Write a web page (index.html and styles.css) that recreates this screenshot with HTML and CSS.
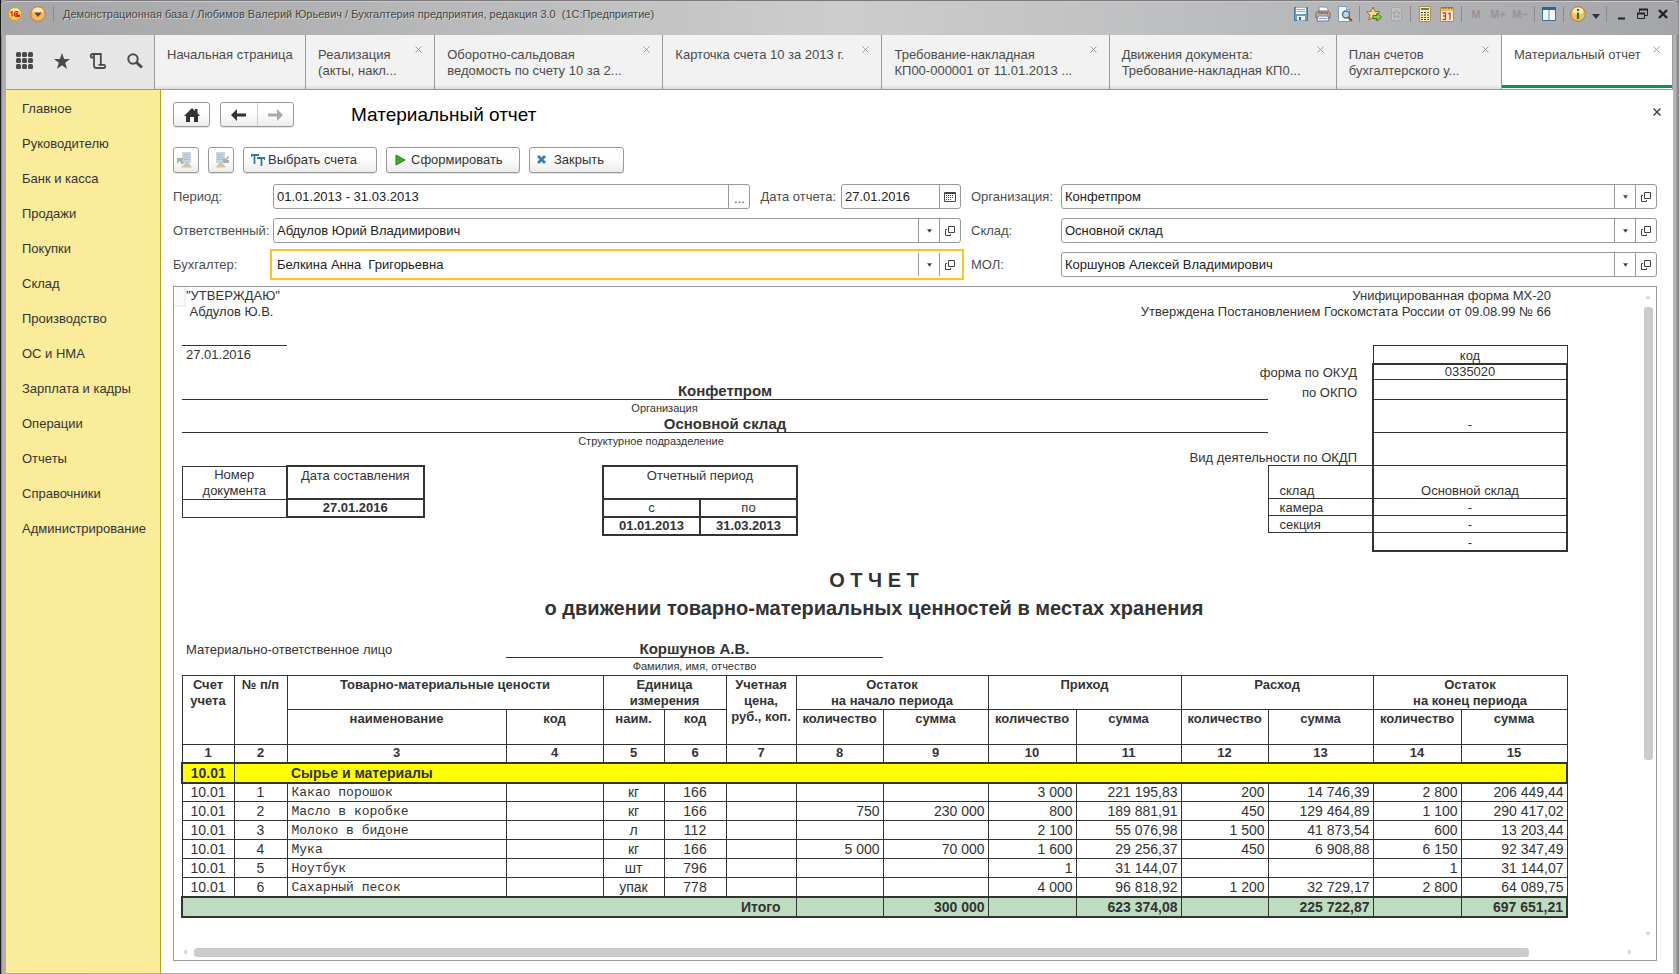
FILE: index.html
```html
<!DOCTYPE html>
<html lang="ru">
<head>
<meta charset="utf-8">
<title>Материальный отчет</title>
<link rel="stylesheet" href="styles.css">
</head>
<body>
<svg class="defs" width="0" height="0" aria-hidden="true">
  <symbol id="i-x" viewBox="0 0 7 7"><path d="M.5.5l6 6M6.5.5l-6 6" stroke="currentColor" fill="none"/></symbol>
  <symbol id="i-down" viewBox="0 0 6 4"><path d="M0 0h6L3 4z" fill="currentColor"/></symbol>
  <symbol id="i-open" viewBox="0 0 10 10"><path d="M3.500.5h6v6h-6zM2 3.500H.5v6h5V8" stroke="currentColor" fill="none"/></symbol>
</svg>
<div class="window">
  <header class="titlebar">
    <svg class="logo" width="14" height="14" viewBox="0 0 14 14"><circle cx="7" cy="7" r="6.500" fill="#fbd64a" stroke="#d89a2a"/><ellipse cx="7" cy="4" rx="4.500" ry="2.500" fill="#fff3b0"/><path d="M2.500 5.500L4 4.500v5M10.500 5.500C9.500 4 6.200 4.200 6.200 7c0 1.800 1 2.400 2.300 2.400H12M10 6.600c-1-.8-2 0-2 .7s.7.800 1.200.8H12" fill="none" stroke="#d8200c" stroke-width="1.200"/></svg>
    <svg class="menu-ball" width="16" height="16" viewBox="0 0 16 16"><circle cx="8" cy="8" r="7.300" fill="#f5b764" stroke="#c47a30"/><ellipse cx="8" cy="5" rx="5.500" ry="3.500" fill="#fde3b8"/><path d="M4 6.500h8L8 11z" fill="#5d4a3a"/></svg>
    <i class="sep"></i>
    <h1 class="caption">Демонстрационная база / Любимов Валерий Юрьевич / Бухгалтерия предприятия, редакция 3.0&nbsp; (1С:Предприятие)</h1>
    <div class="sys">
      <svg width="16" height="16" viewBox="0 0 16 16"><path d="M1.500 1.500h13v13h-13z" fill="#6f9dbf" stroke="#4d7799"/><path d="M3 1.500h10V8H3z" fill="#f3f8fb"/><path d="M4 3.500h8M4 5.500h8" stroke="#8fb0c8"/><path d="M4 10h8v4.500H4z" fill="#e9eef0"/><path d="M6 11h2v3H6z" fill="#3c678c"/></svg>
      <svg width="16" height="16" viewBox="0 0 16 16"><path d="M4 1h7l2 2v4H4z" fill="#fff" stroke="#8890a0"/><path d="M1 7l2-2h10l2 2v5H1z" fill="#c8b8ae" stroke="#6d6060"/><path d="M3 7h10" stroke="#4a4444"/><path d="M3 10h10l1 5H2z" fill="#f4f6fa" stroke="#7b7f88"/><path d="M4 12.500h8" stroke="#7ea3cc"/><path d="M12 8.500h2" stroke="#e07030"/></svg>
      <svg width="16" height="16" viewBox="0 0 16 16"><path d="M1.500.5h8l3 3v12h-11z" fill="#f6fafd" stroke="#7a9ab4"/><path d="M9.500.5v3h3" fill="#c8dcea" stroke="#7a9ab4"/><circle cx="9" cy="8.500" r="3.500" fill="#b7daf0" stroke="#54728a" stroke-width="1.400"/><path d="M11.500 11.500l3.500 3.500" stroke="#9a5030" stroke-width="2.200"/></svg>
      <i class="sep"></i>
      <svg width="16" height="16" viewBox="0 0 16 16"><path d="M7 1l2 4.500 5 .3-4 3.200 1.300 5L7 11.500 2.700 14 4 9 .5 5.800l4.600-.3z" fill="#f8d890" stroke="#a8701c"/><path d="M7 9.500h4V7l4.500 4-4.500 4v-2.500H7z" fill="#8ed04a" stroke="#3c7a18"/></svg>
      <svg class="dim" width="16" height="16" viewBox="0 0 16 16"><path d="M3.500 1.500h10v13h-10z" fill="#c4ced6" stroke="#96a4b0"/><path d="M8.500 4l1.200 2.600 2.800.2-2.200 1.800.8 3-2.600-1.500L5.900 11.600l.8-3L4.500 6.800l2.800-.2z" fill="#cfc4a8" stroke="#a09480"/></svg>
      <i class="sep"></i>
      <svg width="16" height="16" viewBox="0 0 16 16"><path d="M2.500.5h11v15h-11z" fill="#fbeeb8" stroke="#b48a50"/><path d="M4 2h8v2H4z" fill="#5a8a40"/><path d="M4 6.500h8M4 9h8M4 11.500h8M4 13.500h8" stroke="#4a4030" stroke-dasharray="2 1"/><path d="M10.500 6v8" stroke="#d06030" stroke-dasharray="1 1.500"/></svg>
      <svg width="16" height="16" viewBox="0 0 16 16"><path d="M1.500 1.500h13v14h-13z" fill="#fdf3d4" stroke="#b48a50"/><path d="M2 2h12v3H2z" fill="#eab858"/><path d="M4 1v2M7 1v2M10 1v2M12.500 1v2" stroke="#704820"/><path d="M3.500 7h3v6.500h-3M4 10h2.500M9 8l2-1v7" fill="none" stroke="#d83a1a" stroke-width="1.300"/></svg>
      <i class="sep"></i>
      <span class="mem">M</span><span class="mem">M+</span><span class="mem">M−</span>
      <i class="sep"></i>
      <svg width="16" height="16" viewBox="0 0 16 16"><path d="M1.500 1.500h13v13h-13z" fill="#f5f8fb" stroke="#3a6a96"/><path d="M1 1h14v3H1z" fill="#2f6594"/><path d="M8 4v10" stroke="#6a8cab"/></svg>
      <i class="sep"></i>
      <svg width="16" height="16" viewBox="0 0 16 16"><circle cx="8" cy="8" r="7.300" fill="#f4c05c" stroke="#b87830"/><ellipse cx="8" cy="5" rx="5.500" ry="3.500" fill="#fde6b0"/><path d="M8 3v2M8 6.500V13" stroke="#3d6a28" stroke-width="2.200"/></svg>
      <svg class="low" width="8" height="5" viewBox="0 0 8 5"><path d="M0 0h8L4 5z" fill="#333"/></svg>
      <i class="sep"></i>
      <button class="sysbtn" aria-label="Свернуть"><svg width="14" height="14" viewBox="0 0 14 14"><path d="M4 11.500h7" stroke="#222" stroke-width="2"/></svg></button>
      <button class="sysbtn" aria-label="Восстановить"><svg width="14" height="14" viewBox="0 0 14 14"><path d="M4.500 5V2.500h8v6H10M2.500 6.500h7v5h-7z" stroke="#222" fill="none"/><path d="M4 2.500h9M2 6.500h8" stroke="#222" stroke-width="2"/></svg></button>
      <button class="sysbtn" aria-label="Закрыть окно"><svg width="14" height="14" viewBox="0 0 14 14"><path d="M3 3l8 8M11 3l-8 8" stroke="#222" stroke-width="2.400"/></svg></button>
    </div>
  </header>

  <nav class="tabs">
    <div class="tools">
      <button class="tool" aria-label="Меню"><svg width="18" height="18" viewBox="0 0 18 18" fill="#4a4a4a"><rect width="5" height="5" rx="1.500"/><rect x="6" width="5" height="5" rx="1.500"/><rect x="12" width="5" height="5" rx="1.500"/><rect y="6" width="5" height="5" rx="1.500"/><rect x="6" y="6" width="5" height="5" rx="1.500"/><rect x="12" y="6" width="5" height="5" rx="1.500"/><rect y="12" width="5" height="5" rx="1.500"/><rect x="6" y="12" width="5" height="5" rx="1.500"/><rect x="12" y="12" width="5" height="5" rx="1.500"/></svg></button>
      <button class="tool" aria-label="Избранное"><svg width="18" height="18" viewBox="0 0 18 18"><path d="M9 1l2.100 6H17l-4.800 3.700L14 17l-5-3.800L4 17l1.800-6.300L1 7h5.900z" fill="#4a4a4a"/></svg></button>
      <button class="tool" aria-label="История"><svg width="18" height="18" viewBox="0 0 18 18" fill="none" stroke="#4a4a4a" stroke-width="1.800"><path d="M4.500 5.500H2.800C1.500 5.500 1.200 2 3.500 2h8.300v11.500"/><path d="M5 3v10.500c0 1.500 1 2.500 2.300 2.500h7.500c2 0 1.600-3.200.4-3.200H9.500"/></svg></button>
      <button class="tool" aria-label="Поиск"><svg width="18" height="18" viewBox="0 0 18 18" fill="none" stroke="#4a4a4a"><circle cx="7" cy="7" r="4.700" stroke-width="2"/><path d="M10.500 10.500l5.500 5" stroke-width="3"/></svg></button>
    </div>
    <a class="tab t1" href="#"><span>Начальная страница</span></a>
    <a class="tab t2" href="#"><span>Реализация<br>(акты, накл...</span><svg class="x" width="7" height="7"><use href="#i-x"/></svg></a>
    <a class="tab t3" href="#"><span>Оборотно-сальдовая<br>ведомость по счету 10 за 2...</span><svg class="x" width="7" height="7"><use href="#i-x"/></svg></a>
    <a class="tab t4" href="#"><span>Карточка счета 10 за 2013 г.</span><svg class="x" width="7" height="7"><use href="#i-x"/></svg></a>
    <a class="tab t5" href="#"><span>Требование-накладная<br>КП00-000001 от 11.01.2013 ...</span><svg class="x" width="7" height="7"><use href="#i-x"/></svg></a>
    <a class="tab t5" href="#"><span>Движения документа:<br>Требование-накладная КП0...</span><svg class="x" width="7" height="7"><use href="#i-x"/></svg></a>
    <a class="tab t6" href="#"><span>План счетов<br>бухгалтерского у...</span><svg class="x" width="7" height="7"><use href="#i-x"/></svg></a>
    <a class="tab t7 active" href="#"><span>Материальный отчет</span><svg class="x" width="7" height="7"><use href="#i-x"/></svg></a>
  </nav>

  <div class="body">
    <nav class="side">
      <a href="#">Главное</a><a href="#">Руководителю</a><a href="#">Банк и касса</a><a href="#">Продажи</a><a href="#">Покупки</a><a href="#">Склад</a><a href="#">Производство</a><a href="#">ОС и НМА</a><a href="#">Зарплата и кадры</a><a href="#">Операции</a><a href="#">Отчеты</a><a href="#">Справочники</a><a href="#">Администрирование</a>
    </nav>

    <main class="main">
      <div class="head">
        <button class="btn home" aria-label="Домой"><svg width="16" height="14" viewBox="0 0 16 14"><path d="M8 0l3 3V1h2.500v4.200L16 8h-2v6h-4V9H6v5H2V8H0z" fill="#333"/></svg></button>
        <div class="navpair">
          <button aria-label="Назад"><svg width="15" height="12" viewBox="0 0 15 12"><path d="M0 6l6-6v4.500h9v3H6V12z" fill="#333"/></svg></button>
          <button aria-label="Вперед"><svg width="15" height="12" viewBox="0 0 15 12"><path d="M15 6L9 0v4.500H0v3h9V12z" fill="#aaa"/></svg></button>
        </div>
        <h2>Материальный отчет</h2>
        <button class="close" aria-label="Закрыть форму"><svg width="8" height="8" viewBox="0 0 8 8"><path d="M.5.5l7 7M7.500.5l-7 7" stroke="#444" stroke-width="1.500"/></svg></button>
      </div>

      <div class="toolbar">
        <button class="btn sq" aria-label="Загрузить"><svg width="18" height="16" viewBox="0 0 18 16"><path d="M5 0h9v11H5z" fill="#c8d3da"/><path d="M7 2.500h6M7 5h6M7 7.500h6" stroke="#adbcc6"/><path d="M0 6h6v2L4.500 7.500 7 11l-2 1.500L2.500 9 0 12z" fill="#a3b5a3"/><path d="M4 15.500l5-5h2l4 5z" fill="#d0c3a6"/></svg></button>
        <button class="btn sq" aria-label="Сохранить"><svg width="18" height="16" viewBox="0 0 18 16"><path d="M4 0h9v11H4z" fill="#c8d3da"/><path d="M5 2.500h6M5 5h6M5 7.500h6" stroke="#adbcc6"/><path d="M16 4l1 1-2 3h2v3h-6V6l2 1z" fill="#a3b5a3"/><path d="M3 15.500l5-5h2l4 5z" fill="#d0c3a6"/></svg></button>
        <button class="btn wide"><svg width="14" height="14" viewBox="0 0 14 14"><path d="M0 2h8M3.500 2v9M6 5h8M10.500 5v8" stroke="#2f7ba8" stroke-width="1.800"/><path d="M.5 1v3M7.500 1v2M13.500 4v3" stroke="#2f7ba8"/></svg>Выбрать счета</button>
        <button class="btn wide"><svg width="14" height="12" viewBox="0 0 14 12"><path d="M2 1l9 5-9 5z" fill="#3cae22" stroke="#2a7d18"/></svg>Сформировать</button>
        <button class="btn mid"><svg width="14" height="12" viewBox="0 0 14 12"><path d="M1 2l7 7M8 2L1 9" stroke="#3b7fb0" stroke-width="3"/></svg>Закрыть</button>
      </div>

      <form class="form">
        <label class="lb" for="period">Период:</label>
        <div class="pair">
          <div class="field grow"><input id="period" value="01.01.2013 - 31.03.2013"><button type="button" class="fb dots" aria-label="Выбрать период">...</button></div>
          <label for="date">Дата отчета:</label>
          <div class="field date"><input id="date" value="27.01.2016"><button type="button" class="fb" aria-label="Календарь"><svg width="12" height="10" viewBox="0 0 12 10"><path d="M.5.5h11v9H.5z" fill="none" stroke="#444"/><path d="M.5 1.500h11" stroke="#444"/><path d="M2 3.500h8M2 5.500h8M2 7.500h6" stroke="#444" stroke-dasharray="1 1"/></svg></button></div>
        </div>
        <label class="rb" for="org">Организация:</label>
        <div class="field"><input id="org" value="Конфетпром"><button type="button" class="fb" aria-label="Список организаций"><svg class="drop"><use href="#i-down"/></svg></button><button type="button" class="fb" aria-label="Открыть организацию"><svg width="10" height="10"><use href="#i-open"/></svg></button></div>

        <label class="lb" for="resp">Ответственный:</label>
        <div class="field"><input id="resp" value="Абдулов Юрий Владимирович"><button type="button" class="fb" aria-label="Список ответственных"><svg class="drop"><use href="#i-down"/></svg></button><button type="button" class="fb" aria-label="Открыть ответственного"><svg width="10" height="10"><use href="#i-open"/></svg></button></div>
        <label class="rb" for="store">Склад:</label>
        <div class="field"><input id="store" value="Основной склад"><button type="button" class="fb" aria-label="Список складов"><svg class="drop"><use href="#i-down"/></svg></button><button type="button" class="fb" aria-label="Открыть склад"><svg width="10" height="10"><use href="#i-open"/></svg></button></div>

        <label class="lb" for="acc">Бухгалтер:</label>
        <div class="field current"><input id="acc" value="Белкина Анна  Григорьевна"><button type="button" class="fb" aria-label="Список бухгалтеров"><svg class="drop"><use href="#i-down"/></svg></button><button type="button" class="fb" aria-label="Открыть бухгалтера"><svg width="10" height="10"><use href="#i-open"/></svg></button></div>
        <label class="rb" for="mol">МОЛ:</label>
        <div class="field"><input id="mol" value="Коршунов Алексей Владимирович"><button type="button" class="fb" aria-label="Список МОЛ"><svg class="drop"><use href="#i-down"/></svg></button><button type="button" class="fb" aria-label="Открыть МОЛ"><svg width="10" height="10"><use href="#i-open"/></svg></button></div>
      </form>

      <section class="report">
        <div class="sheet">
          <i class="cellmark"></i>
          <div class="top">
            <p class="approve">"УТВЕРЖДАЮ"<br>&nbsp;Абдулов Ю.В.</p>
            <p class="unified">Унифицированная форма МХ-20<br>Утверждена Постановлением Госкомстата России от 09.08.99 № 66</p>
            <p class="sign">27.01.2016</p>
            <p class="org">Конфетпром</p>
            <p class="org-cap">Организация</p>
            <p class="dept">Основной склад</p>
            <p class="dept-cap">Структурное подразделение</p>
            <table class="tb docno">
              <tr class="h33"><td>Номер<br>документа</td><td class="thick">Дата составления</td></tr>
              <tr class="h17"><td></td><td class="thick b">27.01.2016</td></tr>
            </table>
            <table class="tb period">
              <tr class="h33"><td colspan="2" class="thick">Отчетный период</td></tr>
              <tr class="h17"><td class="thick">с</td><td class="thick">по</td></tr>
              <tr class="h17"><td class="thick b">01.01.2013</td><td class="thick b">31.03.2013</td></tr>
            </table>
            <table class="tb codes">
              <colgroup><col class="k1"><col class="k2"><col class="k3"></colgroup>
              <tr class="h18"><td colspan="2" class="no"></td><td>код</td></tr>
              <tr class="h16"><td colspan="2" class="no r">форма по ОКУД</td><td class="c first">0335020</td></tr>
              <tr class="h20"><td colspan="2" class="no r">по ОКПО</td><td class="c"></td></tr>
              <tr class="h33"><td colspan="2" class="no"></td><td class="c">-</td></tr>
              <tr class="h33"><td colspan="2" class="no r">Вид деятельности по ОКДП</td><td class="c"></td></tr>
              <tr class="h33"><td class="no"></td><td class="l">склад</td><td class="c">Основной склад</td></tr>
              <tr class="h17"><td class="no"></td><td class="l">камера</td><td class="c">-</td></tr>
              <tr class="h17"><td class="no"></td><td class="l">секция</td><td class="c">-</td></tr>
              <tr class="h18"><td class="no"></td><td class="no"></td><td class="c last">-</td></tr>
            </table>
          </div>
          <div class="title"><h3>О Т Ч Е Т</h3><h3>о движении товарно-материальных ценностей в местах хранения</h3></div>
          <div class="person"><p class="who">Материально-ответственное лицо</p><p class="name">Коршунов А.В.</p><p class="fio">Фамилия, имя, отчество</p></div>

          <table class="tb data">
            <colgroup><col class="w52"><col class="w53"><col class="w219"><col class="w97"><col class="w61"><col class="w62"><col class="w70"><col class="w87"><col class="w105"><col class="w88"><col class="w105"><col class="w87"><col class="w105"><col class="w88"><col class="w106"></colgroup>
            <thead>
              <tr class="h33"><th rowspan="2">Счет<br>учета</th><th rowspan="2">№ п/п</th><th colspan="2">Товарно-материальные цености</th><th colspan="2">Единица<br>измерения</th><th rowspan="2">Учетная<br>цена,<br>руб., коп.</th><th colspan="2">Остаток<br>на начало периода</th><th colspan="2">Приход</th><th colspan="2">Расход</th><th colspan="2">Остаток<br>на конец периода</th></tr>
              <tr class="h35"><th>наименование</th><th>код</th><th>наим.</th><th>код</th><th>количество</th><th>сумма</th><th>количество</th><th>сумма</th><th>количество</th><th>сумма</th><th>количество</th><th>сумма</th></tr>
              <tr class="nums"><th>1</th><th>2</th><th>3</th><th>4</th><th>5</th><th>6</th><th>7</th><th>8</th><th>9</th><th>10</th><th>11</th><th>12</th><th>13</th><th>14</th><th>15</th></tr>
            </thead>
            <tbody>
              <tr class="group"><td>10.01</td><td class="nr"></td><td class="nl" colspan="13">Сырье и материалы</td></tr>
              <tr><td>10.01</td><td>1</td><td>Какао порошок</td><td></td><td>кг</td><td>166</td><td></td><td></td><td></td><td>3 000</td><td>221 195,83</td><td>200</td><td>14 746,39</td><td>2 800</td><td>206 449,44</td></tr>
              <tr><td>10.01</td><td>2</td><td>Масло в коробке</td><td></td><td>кг</td><td>166</td><td></td><td>750</td><td>230 000</td><td>800</td><td>189 881,91</td><td>450</td><td>129 464,89</td><td>1 100</td><td>290 417,02</td></tr>
              <tr><td>10.01</td><td>3</td><td>Молоко в бидоне</td><td></td><td>л</td><td>112</td><td></td><td></td><td></td><td>2 100</td><td>55 076,98</td><td>1 500</td><td>41 873,54</td><td>600</td><td>13 203,44</td></tr>
              <tr><td>10.01</td><td>4</td><td>Мука</td><td></td><td>кг</td><td>166</td><td></td><td>5 000</td><td>70 000</td><td>1 600</td><td>29 256,37</td><td>450</td><td>6 908,88</td><td>6 150</td><td>92 347,49</td></tr>
              <tr><td>10.01</td><td>5</td><td>Ноутбук</td><td></td><td>шт</td><td>796</td><td></td><td></td><td></td><td>1</td><td>31 144,07</td><td></td><td></td><td>1</td><td>31 144,07</td></tr>
              <tr><td>10.01</td><td>6</td><td>Сахарный песок</td><td></td><td>упак</td><td>778</td><td></td><td></td><td></td><td>4 000</td><td>96 818,92</td><td>1 200</td><td>32 729,17</td><td>2 800</td><td>64 089,75</td></tr>
            </tbody>
            <tfoot>
              <tr class="total"><td colspan="7" class="sumlabel">Итого</td><td></td><td>300 000</td><td></td><td>623 374,08</td><td></td><td>225 722,87</td><td></td><td>697 651,21</td></tr>
            </tfoot>
          </table>
        </div>
        <div class="vbar"><svg width="6" height="4" viewBox="0 0 6 4"><path d="M3 0l3 4H0z" fill="#d8d8d8"/></svg><i class="thumb"></i><i class="rest"></i><svg width="6" height="4" viewBox="0 0 6 4"><path d="M0 0h6L3 4z" fill="#d8d8d8"/></svg></div>
        <div class="hbar"><svg width="4" height="6" viewBox="0 0 4 6"><path d="M4 0v6L0 3z" fill="#d8d8d8"/></svg><i class="thumb"></i><i class="rest"></i><svg width="4" height="6" viewBox="0 0 4 6"><path d="M0 0l4 3-4 3z" fill="#d8d8d8"/></svg></div>
      </section>
    </main>
  </div>
</div>
</body>
</html>
```
FILE: styles.css
```css
* { box-sizing: border-box; }
body { margin: 0; font: 13px/16px "Liberation Sans", Arial, sans-serif; color: #333; background: #fff; }
h1, h2, h3, p { margin: 0; font: inherit; }
button { font: inherit; color: inherit; padding: 0; border: 0; background: none; }
a { color: inherit; text-decoration: none; }
svg { flex: none; display: block; }
.defs { position: absolute; }

.window { min-height: 100vh; display: flex; flex-direction: column; padding: 0 6px 1px; background: linear-gradient(90deg, #1a1a1a 1px, #8c898b 1px, #8c898b 2px, #b0aeb0 2px, #b4b4b6 calc(100% - 3px), #8a8a8c calc(100% - 2px)); }

.titlebar { margin: 0 -5px; height: 35px; padding: 5px 8px 0 7px; display: flex; align-items: flex-start; border-top: 1px solid #7c7a7d; border-radius: 6px 6px 0 0; background: linear-gradient(90deg, #a5a5a8, #b2b3b5 20%, #cdcdcd 50%, #bfc0c1 68%, #a3a5a9); box-shadow: inset 0 1px #c9c9cb; }
.logo { margin-top: 1px; }
.menu-ball { margin: 0 7px 0 8px; }
.caption { font-size: 11px; line-height: 16px; margin-left: 9px; color: #444; text-shadow: 1px 1px #d8d8d8; white-space: nowrap; }
.sep { flex: none; width: 1px; height: 16px; background: #8b8b8e; }
.sys { margin-left: auto; display: flex; gap: 6px; }
.dim { opacity: .6; }
.low { margin-top: 8px; }
.mem { width: 16px; text-align: center; font: bold 11px/16px "Liberation Sans", Arial, sans-serif; color: #9c9190; }
.sysbtn { width: 15px; height: 16px; display: grid; place-items: center; }

.tabs { display: flex; height: 55px; background: #f1f1f1; border-bottom: 1px solid #999; }
.tools { flex: 0 0 148px; display: flex; justify-content: space-between; align-items: center; padding: 0 10px 2px 10px; background: #e6e6e6; }
.tab { position: relative; min-width: 0; display: flex; padding: 12px 0 0 12px; border-left: 1px solid #999; color: #4a4a4a; white-space: nowrap; overflow: hidden; background: linear-gradient(#f2f2f2 50px, #dcdcdc); }
.tab .x { position: absolute; top: 11px; right: 12px; color: #999; }
.t1 { flex: 151 1 151px; } .t2 { flex: 129 1 129px; } .t3 { flex: 228 1 228px; } .t4 { flex: 219 1 219px; } .t5 { flex: 227 1 227px; } .t6 { flex: 165 1 165px; } .t7 { flex: 172 1 172px; }
.tab.active { background: #fff; box-shadow: inset 0 -1px #fff, inset 0 -4px #009646; border-right: 1px solid #999; }

.body { flex: 1; display: flex; }
.side { flex: 0 0 155px; display: flex; flex-direction: column; padding: 11px 0 0 16px; gap: 19px; background: #fbec9b; border-right: 1px solid #b9a21c; }
.main { flex: 1; min-width: 0; display: flex; flex-direction: column; padding: 12px 16px 12px 12px; background: #fff; }

.head { display: flex; height: 26px; align-items: flex-start; }
.btn, .navpair { height: 25px; border: 1px solid #999; border-radius: 3px; background: linear-gradient(#fff 40%, #ececec); box-shadow: 0 1px #e4e4e4; }
.home { width: 37px; display: grid; place-items: center; }
.navpair { width: 74px; margin-left: 10px; display: flex; }
.navpair button { flex: 1; display: grid; place-items: center; }
.navpair button + button { border-left: 1px solid #ccc; }
.head h2 { margin-left: 57px; font-size: 19px; line-height: 26px; color: #000; }
.close { margin: 6px -4px 0 auto; width: 8px; height: 8px; }

.toolbar { display: flex; gap: 9px; margin: 19px 0 11px; }
.toolbar .btn { height: 26px; display: flex; align-items: center; }
.toolbar .sq { width: 26px; justify-content: center; }
.toolbar .wide { width: 134px; padding-left: 7px; gap: 3px; }
.toolbar .mid { width: 95px; padding-left: 7px; gap: 3px; }

.form { display: grid; grid-template-columns: 100px 688fr 100px 596fr; grid-auto-rows: 25px; row-gap: 9px; align-items: center; margin-bottom: 9px; }
.form label { color: #4d4d4d; white-space: nowrap; }
.rb { padding-left: 10px; }
.pair { display: flex; align-items: center; }
.pair label { margin: 0 5px 0 10px; }
.field { display: flex; height: 25px; border: 1px solid #999; border-radius: 3px; background: #fff; min-width: 0; }
.field.grow { flex: 1; }
.field.date { width: 120px; }
.field input { flex: 1; min-width: 0; border: 0; padding: 0 3px; background: none; font: inherit; color: #222; outline: 0; white-space: pre; }
.fb { flex: none; width: 21px; display: grid; place-items: center; border-left: 1px solid #999; color: #444; }
.dots { padding-top: 4px; }
.drop { width: 5px; height: 4px; }
.current { border-color: #fff; outline: 2px solid #f8c71e; outline-offset: 1px; border-radius: 0; }

.report { flex: 1; display: grid; grid-template-columns: minmax(0, 1fr) 16px; grid-template-rows: 1fr 16px; border: 1px solid #999; background: #fff; }
.sheet { position: relative; overflow: hidden; padding: 1px 0 0 8px; }
.cellmark { position: absolute; left: 0; top: 0; width: 12px; height: 20px; border: solid #f0f0f0; border-width: 0 2px 2px 0; background: #fafafa; }
.top { position: relative; display: grid; width: max-content; grid-template-columns: 105px 219px 97px 61px 62px 70px 385px 87px 105px 194px; grid-template-rows: 34px 24px 34px 20px 16px 17px 32px 88px; }
.approve { grid-area: 1 / 1 / 2 / 3; padding-left: 4px; line-height: 16px; }
.unified { grid-area: 1 / 7 / 2 / 11; padding-right: 16px; text-align: right; line-height: 16px; }
.sign { grid-area: 2 / 1 / 4 / 2; margin-top: 23px; border-top: 1px solid #333; padding: 1px 4px 0; }
.org { grid-area: 4 / 1 / 5 / 9; }
.dept { grid-area: 6 / 1 / 7 / 9; }
.org, .dept { text-align: center; font-weight: bold; font-size: 15px; line-height: 16px; border-bottom: 1px solid #333; display: grid; align-content: end; }
.org-cap { grid-area: 5 / 4 / 6 / 6; }
.dept-cap { grid-area: 7 / 3 / 8 / 7; }
.org-cap, .dept-cap, .fio { text-align: center; font-size: 11px; line-height: 16px; white-space: nowrap; }

.tb { border-collapse: collapse; table-layout: fixed; }
.tb td, .tb th { padding: 0; border: 1px solid #333; line-height: 16px; vertical-align: top; text-align: center; }
.tb td.thick { border-width: 2px; }
.b { font-weight: bold; }
.h16 { height: 16px; } .h17 { height: 17px; } .h18 { height: 18px; } .h20 { height: 20px; } .h33 { height: 33px; } .h35 { height: 35px; }
.docno { grid-area: 8 / 1 / 9 / 3; width: 243px; align-self: start; }
.docno td:first-child { width: 104px; }
.docno .h33 .thick, .period .h33 td { padding-top: 1px; }
.period { grid-area: 8 / 4 / 9 / 8; width: 196px; margin-left: -1px; align-self: start; }
.codes { grid-area: 2 / 8 / 9 / 11; width: 386px; margin-top: 23px; align-self: start; }
.k1 { width: 87px; } .k2 { width: 105px; } .k3 { width: 194px; }
.tb.codes td { vertical-align: bottom; line-height: 14px; }
.tb.codes td.no { border: 0; }
.tb.codes td.r { text-align: right; padding-right: 15px; white-space: nowrap; }
.tb.codes td.l { text-align: left; padding-left: 11px; }
.tb.codes td.c { border-left-width: 2px; border-right-width: 2px; }
.tb.codes td.first { border-top-width: 2px; }
.tb.codes td.last { border-bottom-width: 2px; }

.title { width: 1384px; display: grid; gap: 4px; padding-top: 15px; text-align: center; font-weight: bold; font-size: 20px; line-height: 24px; }
.person { display: grid; width: max-content; grid-template-columns: 324px 377px; grid-template-rows: 17px 17px; margin-top: 21px; }
.who { padding: 1px 4px 0; }
.name { text-align: center; font-weight: bold; font-size: 15px; border-bottom: 1px solid #333; }
.fio { grid-column: 2; }

.data { width: 1386px; margin-left: -1px; }
.data th { font-weight: bold; white-space: nowrap; }
.w52 { width: 52px; } .w53 { width: 53px; } .w219 { width: 219px; } .w97 { width: 97px; } .w61 { width: 61px; } .w62 { width: 62px; } .w70 { width: 70px; } .w87 { width: 87px; } .w105 { width: 105px; } .w106 { width: 106px; } .w88 { width: 88px; }
.data thead th { padding-top: 1px; }
.data .nums { height: 18px; }
.data .nums th { padding-top: 0; }
.data tbody tr { height: 19px; }
.data tbody td, .data tfoot td { font-size: 14px; white-space: nowrap; vertical-align: middle; }
.data tbody td:nth-child(3) { font: 13px/14px "Liberation Mono", "Courier New", monospace; text-align: left; padding: 2px 0 0 4px; }
.data tbody td:nth-child(n+8), .data tfoot td { text-align: right; padding-right: 3px; }
.data tbody .group { height: 20px; background: #ff0; }
.data tbody .group td { padding-top: 0; line-height: 16px; border-top-width: 2px; border-bottom-width: 2px; font-family: "Liberation Sans", Arial, sans-serif; font-weight: bold; font-size: 14px; }
.data .group td:first-child, .data .total td:first-child { border-left-width: 2px; }
.data .group td:last-child, .data .total td:last-child { border-right-width: 2px; }
.data td.nr { border-right-color: transparent; border-right-style: hidden; }
.data .total { height: 20px; background: #c0dcc0; font-weight: bold; }
.data .total td { border-top-width: 2px; border-bottom-width: 2px; }
.data tfoot td.sumlabel { padding-right: 15px; }

.vbar { display: flex; flex-direction: column; align-items: center; padding: 8px 0 8px; }
.vbar .thumb { flex: 451; width: 9px; margin-top: 8px; background: #cbcbcb; border-radius: 3px; }
.vbar .rest { flex: 171; }
.hbar { display: flex; align-items: center; padding: 0 8px 0 9px; }
.hbar .thumb { flex: 1335; height: 9px; margin-left: 7px; background: #cbcbcb; border-radius: 3px; }
.hbar .rest { flex: 99; }
```
